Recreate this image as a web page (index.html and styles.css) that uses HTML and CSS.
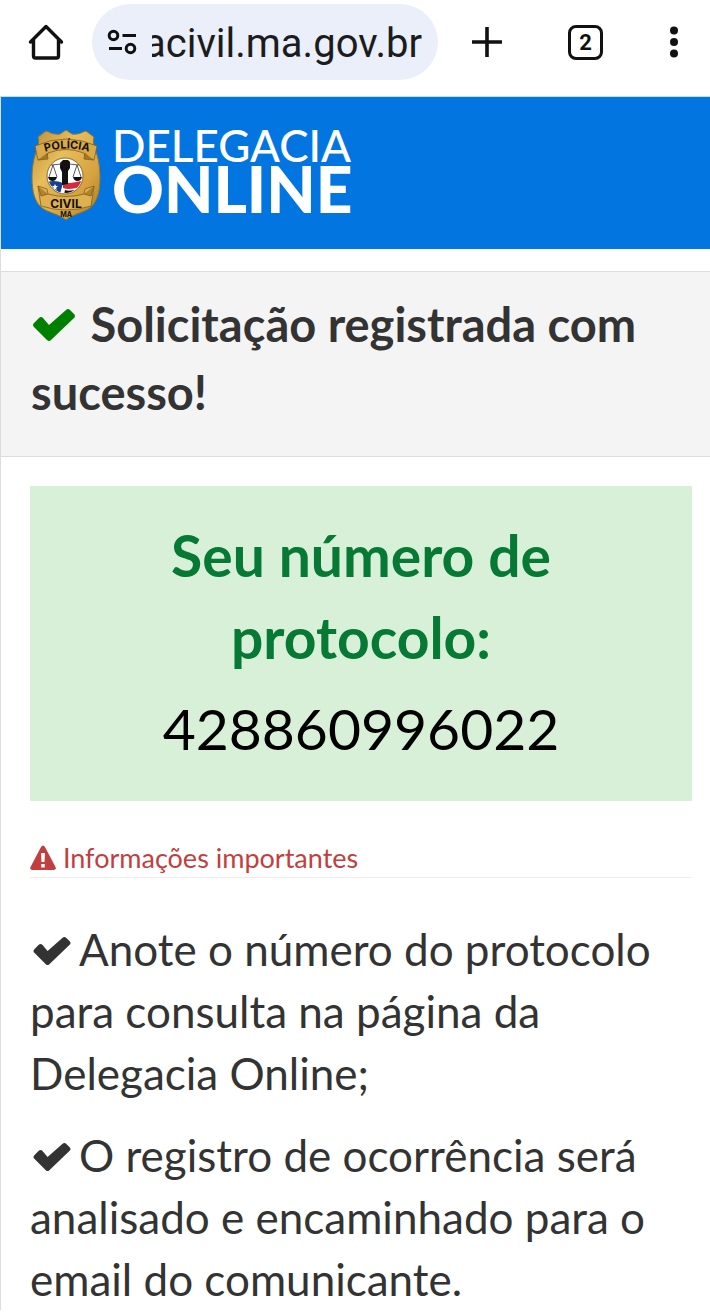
FILE: index.html
```
<!DOCTYPE html>
<html lang="pt-BR">
<head>
  <meta charset="UTF-8" />
  <meta name="viewport" content="width=device-width, initial-scale=1.0"/>
  <title>Delegacia Online</title>
  <link rel="stylesheet" href="styles.css">
</head>
<body>

  <div class="toolbar">
    <button class="icon-btn" aria-label="Página inicial">
      <svg width="36" height="38" viewBox="0 0 36 38" fill="none" stroke="#111" stroke-width="3.400" stroke-linecap="round" stroke-linejoin="round">
        <path d="M2.500 19L18 3.500 33.500 19M5.500 17v16a2 2 0 0 0 2 2h21a2 2 0 0 0 2-2V17"/>
      </svg>
    </button>

    <div class="address-bar">
      <button class="icon-btn site-btn" aria-label="Informações do site">
        <svg width="30" height="26" viewBox="0 0 30 26" fill="none" stroke="#111" stroke-width="3">
          <circle cx="6.500" cy="6.500" r="4.300"/>
          <path d="M15.500 6.500H29M2 19.500h13"/>
          <circle cx="23.500" cy="19.500" r="4.300"/>
        </svg>
      </button>
      <input class="address" type="text" value="acivil.ma.gov.br" aria-label="Endereço" readonly>
    </div>

    <div class="toolbar-actions">
      <button class="icon-btn" aria-label="Nova aba">
        <svg width="30" height="30" viewBox="0 0 30 30" stroke="#111" stroke-width="3.600">
          <path d="M15 0v30M0 15h30"/>
        </svg>
      </button>
      <button class="icon-btn tabs-btn" aria-label="Abas abertas">2</button>
      <button class="icon-btn" aria-label="Mais opções">
        <svg width="10" height="32" viewBox="0 0 10 32" fill="#111">
          <circle cx="5" cy="4.500" r="4"/>
          <circle cx="5" cy="16" r="4"/>
          <circle cx="5" cy="27.500" r="4"/>
        </svg>
      </button>
    </div>
  </div>

  <div class="page">
    <header class="site-header">
      <a class="brand" href="#">
        <svg class="badge" width="70" height="92" viewBox="0 0 70 92" role="img" aria-label="Polícia Civil MA">
          <defs>
            <linearGradient id="gold" x1="0" y1="0" x2="1" y2="1">
              <stop offset="0" stop-color="#b98d35"/>
              <stop offset=".35" stop-color="#e8bd5c"/>
              <stop offset=".7" stop-color="#d5a23e"/>
              <stop offset="1" stop-color="#a9771f"/>
            </linearGradient>
            <clipPath id="disc"><circle cx="34" cy="47" r="17"/></clipPath>
            <path id="arc" d="M5 26Q36 13 67 26"/>
          </defs>
          <path d="M35 1l6 4c7 1 10-2 14-3l8 6c-2 7 1 12 3 18 2 7 3 14 3 22 0 16-3 25-10 31-7 5-17 6-24 12-7-6-17-7-24-12C4 73 1 64 1 48c0-8 1-15 3-22 2-6 5-11 3-18l8-6c4 1 7 4 14 3z" fill="url(#gold)" stroke="#8f7437" stroke-width="1"/>
          <path d="M4 17Q35 3 66 17l-3 14-9-4-1-3Q35 17 17 24l-1 3-9 4z" fill="#d9a94a" stroke="#7d5f22" stroke-width=".8"/>
          <path d="M7 31l10-1-1-6M63 31l-10-1 1-6" fill="#a47725" stroke="#7d5f22" stroke-width=".8"/>
          <text class="badge-text" font-size="11"><textPath href="#arc" startOffset="50%" text-anchor="middle">POLÍCIA</textPath></text>
          <circle cx="34" cy="47" r="18" fill="#fff" stroke="#8f6c25" stroke-width="1"/>
          <g clip-path="url(#disc)">
            <path d="M16 53c6-2 11-1 16 1l-3 11H16z" fill="#17408f"/>
            <path d="M32 53c8 3 12-1 20-1v6c-8 0-12 4-20 1z" fill="#d52b3c"/>
            <path d="M34 61c5 2 9-1 15 0l-6 5H33z" fill="#111"/>
            <path d="M24 55l1 2h2l-2 2 1 2-2-1-2 1 1-2-2-2h2z" fill="#fff"/>
          </g>
          <path d="M30 33l2-2h5l2 2v6l-2 3v13l-6 1V43l-2-4v-5z" fill="#111"/>
          <path d="M20 36l11-1M38 35l10 1M22 36l-4 12M22 36l4 12M46 36l-4 12M46 36l4 12" stroke="#333" stroke-width=".8" fill="none"/>
          <path d="M17 48h9q-1 4-4.500 4t-4.500-4zM42 48h9q-1 4-4.500 4t-4.500-4z" fill="#111"/>
          <path d="M7 57l9 3 1 5q18 5 36 0l1-5 9-3-3 20Q35 85 10 77z" fill="#dfb050" stroke="#7d5f22" stroke-width=".8"/>
          <path d="M7 57l3 10 7-2M63 57l-3 10-7-2" fill="#b2832e" stroke="#7d5f22" stroke-width=".8"/>
          <text class="badge-text" x="35" y="79" font-size="12" text-anchor="middle">CIVIL</text>
          <text class="badge-text" x="35" y="88" font-size="7" text-anchor="middle">MA</text>
        </svg>
        <span class="brand-name">
          <span class="brand-top">DELEGACIA</span>
          <span class="brand-bottom">ONLINE</span>
        </span>
      </a>
    </header>

    <main class="content">
      <div class="title-bar">
        <h1>
          <svg class="check-lg" viewBox="0 0 42 34" aria-hidden="true"><path d="M1 15l5-5q2-2 4 0l6 7L33 2q2-2 4 0l4 4q2 2 0 4L18 32q-2 2-4 0L1 19q-2-2 0-4z"/></svg>
          Solicitação registrada com sucesso!
        </h1>
      </div>

      <section class="protocol">
        <h2>Seu número de protocolo:</h2>
        <p class="protocol-number">428860996022</p>
      </section>

      <section class="info">
        <h3>
          <svg class="warning" viewBox="0 0 26 26" aria-hidden="true">
            <path d="M11 2q2-3 4 0l10.500 20q1 3-2 3h-21q-3 0-2-3z"/>
            <path d="M11 8h4l-.5 9h-3zM11.300 19h3.400v3.500h-3.400z" fill="#fff"/>
          </svg>
          Informações importantes
        </h3>
        <p>
          <svg class="check" viewBox="0 0 42 34" aria-hidden="true"><path d="M1 15l5-5q2-2 4 0l6 7L33 2q2-2 4 0l4 4q2 2 0 4L18 32q-2 2-4 0L1 19q-2-2 0-4z"/></svg>Anote o número do protocolo para consulta na página da Delegacia Online;
        </p>
        <p>
          <svg class="check" viewBox="0 0 42 34" aria-hidden="true"><path d="M1 15l5-5q2-2 4 0l6 7L33 2q2-2 4 0l4 4q2 2 0 4L18 32q-2 2-4 0L1 19q-2-2 0-4z"/></svg>O registro de ocorrência será analisado e encaminhado para o email do comunicante.
        </p>
      </section>
    </main>
  </div>

</body>
</html>
```
FILE: styles.css
```
* {
  box-sizing: border-box;
}

body {
  margin: 0;
  background-color: #fff;
  color: #333;
  font-family: Lato, sans-serif;
}

h1, h2, h3, p {
  margin: 0;
}

/* browser toolbar */
.toolbar {
  display: flex;
  align-items: center;
  gap: 28px;
  height: 97px;
  padding: 0 31px 12px 28px;
  border-bottom: 1px solid #b5e3f5;
}

.toolbar-actions {
  display: flex;
  align-items: center;
  gap: 66px;
  margin-left: 6px;
}

.icon-btn {
  display: flex;
  align-items: center;
  justify-content: center;
  flex: none;
  padding: 0;
  border: none;
  background: none;
  color: #111;
  cursor: pointer;
}

.address-bar {
  display: flex;
  flex: 1;
  align-items: center;
  min-width: 0;
  height: 76px;
  padding: 0 16px 0 15px;
  border-radius: 38px;
  background-color: #ebeffa;
}

.site-btn {
  margin-right: 15px;
}

/* rtl keeps the end of the address in view */
.address {
  flex: 1;
  min-width: 0;
  padding: 2px 0 0;
  border: none;
  outline: none;
  background: none;
  color: #1b1c20;
  font-family: Roboto, sans-serif;
  font-size: 40px;
  direction: rtl;
}

.tabs-btn {
  width: 35px;
  height: 35px;
  border: 3px solid #111;
  border-radius: 8px;
  font-family: Roboto, sans-serif;
  font-size: 22px;
  font-weight: bold;
}

.page {
  border-left: 1px solid #ddd;
}

/* site header */
.site-header {
  height: 152px;
  padding: 32px 30px;
  background-color: #0275e0;
}

.brand {
  display: inline-flex;
  gap: 11px;
  color: #fff;
  text-decoration: none;
}

.badge-text {
  fill: #111;
  font-family: Inter, sans-serif;
  font-weight: bold;
}

.brand-name {
  display: flex;
  flex-direction: column;
}

.brand-top {
  font-size: 44px;
  font-weight: 500;
  line-height: 32px;
}

.brand-bottom {
  font-size: 64px;
  font-weight: 900;
  line-height: 56px;
}

/* content */
.title-bar {
  margin-top: 22px;
  padding: 18px 30px 30px;
  border-top: 1px solid #ddd;
  border-bottom: 1px solid #ddd;
  background-color: #f4f4f4;
}

h1 {
  font-size: 47px;
  line-height: 68px;
}

.check-lg {
  width: 42px;
  height: 34px;
  margin: 0 4px 0 2px;
  fill: #008000;
}

.protocol {
  margin: 29px 18px 0 29px;
  padding: 28px 110px 27px;
  background-color: #d8f0d8;
  text-align: center;
}

h2 {
  color: #067a35;
  font-size: 57px;
  line-height: 82px;
}

.protocol-number {
  padding-top: 4px;
  color: #000;
  font-size: 57px;
  line-height: 92px;
}

.info {
  margin: 40px 18px 0 29px;
}

h3 {
  margin-bottom: 40px;
  padding-bottom: 2px;
  border-bottom: 1px solid #eee;
  color: #c23f3f;
  font-size: 27px;
  font-weight: normal;
  line-height: 34px;
}

.warning {
  width: 26px;
  height: 26px;
  vertical-align: -3px;
  fill: #c23f3f;
}

.info p {
  margin-bottom: 20px;
  font-size: 44px;
  line-height: 62px;
}

.check {
  width: 38px;
  height: 30px;
  margin: 0 8px 0 3px;
  fill: #333;
}
```
